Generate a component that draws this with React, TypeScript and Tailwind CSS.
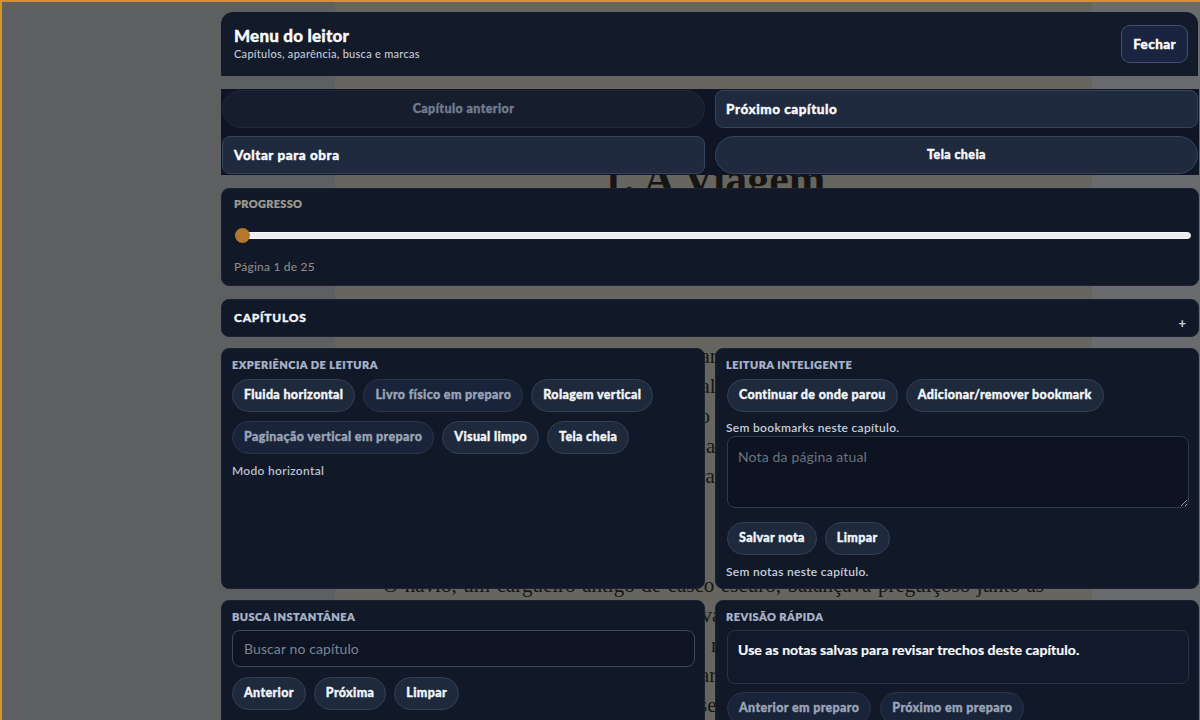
import React from "react";

// heavy UI text: Lato bold, thickened a little and opened up
const heavy = "font-black [-webkit-text-stroke:0.35px_currentColor]";
const chip =
  `h-[33px] px-[11px] rounded-full border border-[#334155] bg-[#1e293b] text-[12.5px] tracking-[0.35px] text-[#f1f5f9] flex items-center whitespace-nowrap ${heavy}`;
const chipMuted =
  `h-[33px] px-[11px] rounded-full border border-[#2a3548] bg-[#19233a] text-[12.5px] tracking-[0.35px] text-[#9aa4b6] flex items-center whitespace-nowrap ${heavy}`;
const card = "rounded-[8px] bg-[#111827] border border-[#1a2233]";
const label =
  "text-[11px] leading-[14px] font-extrabold uppercase tracking-[0.45px] text-[#a8b3c9] [-webkit-text-stroke:0.2px_currentColor]";
const note = "text-[12px] leading-[16px] font-semibold tracking-[0.3px]";

function BookPage() {
  return (
    <div className="absolute inset-0 flex">
      <div className="w-[333px] bg-[#5e5f61]" />
      <div className="w-[757px] bg-[#67655f] px-[48px] pt-[150px] font-['Liberation_Serif',serif] text-[#161514]">
        <h1 className="text-center text-[44px] leading-[56px] font-bold">1. A Viagem</h1>
        <p className="mt-[133px] text-[21px] leading-[30px] text-justify">
          Naquela manhã o vento soprava do mar com insistência, e as gaivotas giravam sobre o cais
          como se anunciassem algo que ninguém sabia nomear. Clara segurava a pequena mala de couro
          que fora do pai, gasta e de alças remendadas, que parecia carregar mais lembranças do que
          roupas. Nunca tinha saído da cidade, e a ideia de atravessar o oceano lhe dava um misto
          de medo e de encanto.
        </p>
        <p className="mt-[49px] text-[21px] leading-[30px] text-justify">
          O navio, um cargueiro antigo de casco escuro, balançava preguiçoso junto às pedras do
          porto. Marinheiros gritavam ordens em línguas que ela mal reconhecia, e o cheiro de sal,
          óleo e madeira molhada enchia o ar. Quando finalmente subiu a escada estreita, Clara
          olhou para trás uma última vez e viu a cidade inteira encolher diante de seus olhos,
          pequena como um desenho esquecido sobre a mesa da cozinha.
        </p>
      </div>
      <div className="flex-1 bg-[#6a6b6e]" />
    </div>
  );
}

export default function App() {
  return (
    <div className="relative w-[1200px] h-[720px] overflow-hidden border-t-2 border-l-2 border-[#d4941f] bg-[#5e5f61] font-['Lato',sans-serif]">
      <BookPage />

      {/* reader menu panel, floating over the page */}
      <div className="absolute left-[219px] top-[10px] w-[978px] flex flex-col">
        <header className="h-[64px] w-[977px] rounded-t-[12px] bg-[#131a29] flex items-center justify-between pl-[13px] pr-[10px]">
          <div className="flex flex-col">
            <span className={`text-[17px] leading-[20px] tracking-[0.2px] text-[#f8fafc] ${heavy}`}>Menu do leitor</span>
            <span className="text-[11px] leading-[16px] font-medium tracking-[0.28px] text-[#c3cad8]">
              Capítulos, aparência, busca e marcas
            </span>
          </div>
          <button className={`h-[38px] px-[11px] rounded-[9px] border border-[#3e4f72] bg-[#1a2440] text-[13.5px] tracking-[0.4px] text-white ${heavy}`}>
            Fechar
          </button>
        </header>

        <nav className="mt-[13px] bg-[#0f1524] grid grid-cols-2 gap-x-[10px] gap-y-[8px] p-px">
          <button className={`h-[38px] rounded-full border border-[#1f2939] bg-[#161e2e] text-[12.5px] tracking-[0.4px] text-[#717c8e] ${heavy}`}>
            Capítulo anterior
          </button>
          <button className={`h-[38px] rounded-[8px] border border-[#36445e] bg-[#1f2a3f] pl-[10px] text-left text-[13.5px] tracking-[0.55px] text-[#f8fafc] ${heavy}`}>
            Próximo capítulo
          </button>
          <button className={`h-[38px] rounded-[8px] border border-[#36445e] bg-[#1f2a3f] pl-[11px] text-left text-[13.5px] tracking-[0.55px] text-[#f8fafc] ${heavy}`}>
            Voltar para obra
          </button>
          <button className={`h-[38px] rounded-full border border-[#36445e] bg-[#1f2a3f] text-[12.5px] tracking-[0.4px] text-[#f8fafc] ${heavy}`}>
            Tela cheia
          </button>
        </nav>

        <section className={`${card} mt-[13px] pl-[12px] pr-[7px] pt-[8px] pb-[10px]`}>
          <div className="text-[11px] leading-[14px] font-extrabold uppercase tracking-[0.3px] text-[#9d9890] [-webkit-text-stroke:0.2px_currentColor]">
            Progresso
          </div>
          <div className="relative mt-[17px] h-[15px] flex items-center">
            <div className="ml-[2px] h-[7px] flex-1 rounded-full bg-[#ededed] border border-[#f8f8f8]" />
            <div className="absolute left-[1px] top-0 w-[15px] h-[15px] rounded-full bg-[#b3772e]" />
          </div>
          <div className="mt-[16px] text-[12px] leading-[16px] font-medium tracking-[0.2px] text-[#8e8b86]">Página 1 de 25</div>
        </section>

        <section className={`${card} mt-[13px] h-[38px] flex items-center justify-between pl-[12px] pr-[12px]`}>
          <span className={`text-[12px] tracking-[0.06em] text-[#f1f5f9] ${heavy}`}>CAPÍTULOS</span>
          <span className="mt-[10px] text-[13px] font-black text-[#c0cbe0] leading-none">+</span>
        </section>

        <div className="mt-[11px] grid grid-cols-2 gap-x-[10px] gap-y-[11px]">
          <section className={`${card} h-[241px] px-[10px] pt-[9px]`}>
            <div className={label}>Experiência de leitura</div>
            <div className="mt-[7px] flex flex-wrap gap-x-[8px] gap-y-[9px]">
              <span className={chip}>Fluida horizontal</span>
              <span className={chipMuted}>Livro físico em preparo</span>
              <span className={chip}>Rolagem vertical</span>
              <span className={chipMuted}>Paginação vertical em preparo</span>
              <span className={chip}>Visual limpo</span>
              <span className={chip}>Tela cheia</span>
            </div>
            <div className={`mt-[9px] ${note} text-[#b8c1d3]`}>Modo horizontal</div>
          </section>

          <section className={`${card} h-[241px] pl-[10px] pr-[9px] pt-[9px]`}>
            <div className={label}>Leitura inteligente</div>
            <div className="mt-[7px] flex flex-wrap gap-x-[8px] pl-px">
              <span className={chip}>Continuar de onde parou</span>
              <span className={chip}>Adicionar/remover bookmark</span>
            </div>
            <div className={`mt-[8px] ${note} leading-[15px] text-[#c6cfdd]`}>Sem bookmarks neste capítulo.</div>
            <textarea
              placeholder="Nota da página atual"
              className="ml-px block w-[462px] h-[72px] resize-y rounded-[8px] border border-[#2f3a4e] bg-[#0d1321] px-[10px] py-[9px] text-[14px] tracking-[0.15px] text-white placeholder:text-[#6b7280] outline-none"
            />
            <div className="mt-[14px] flex gap-x-[8px] pl-px">
              <span className={chip}>Salvar nota</span>
              <span className={chip}>Limpar</span>
            </div>
            <div className={`mt-[9px] ${note} text-[#c6cfdd]`}>Sem notas neste capítulo.</div>
          </section>

          <section className={`${card} h-[140px] px-[10px] pt-[9px]`}>
            <div className={label}>Busca instantânea</div>
            <input
              placeholder="Buscar no capítulo"
              className="mt-[6px] block w-[463px] h-[37px] rounded-[8px] border border-[#3a475d] bg-[#0e1422] px-[11px] text-[14px] tracking-[0.1px] text-white placeholder:text-[#7b8494] outline-none"
            />
            <div className="mt-[10px] flex gap-x-[8px]">
              <span className={`${chip} h-[32px]`}>Anterior</span>
              <span className={`${chip} h-[32px]`}>Próxima</span>
              <span className={`${chip} h-[32px]`}>Limpar</span>
            </div>
          </section>

          <section className={`${card} h-[140px] pl-[10px] pr-[9px] pt-[9px]`}>
            <div className={label}>Revisão rápida</div>
            <div className="mt-[6px] ml-px h-[54px] rounded-[8px] border border-[#2a3446] bg-[#111a2a] px-[10px] pt-[11px] text-[14px] leading-[16px] font-bold tracking-[0.05px] text-[#f8fafc] [-webkit-text-stroke:0.2px_currentColor]">
              Use as notas salvas para revisar trechos deste capítulo.
            </div>
            <div className="mt-[8px] flex gap-x-[9px] pl-px">
              <span className={chipMuted}>Anterior em preparo</span>
              <span className={chipMuted}>Próximo em preparo</span>
            </div>
          </section>
        </div>
      </div>
    </div>
  );
}
